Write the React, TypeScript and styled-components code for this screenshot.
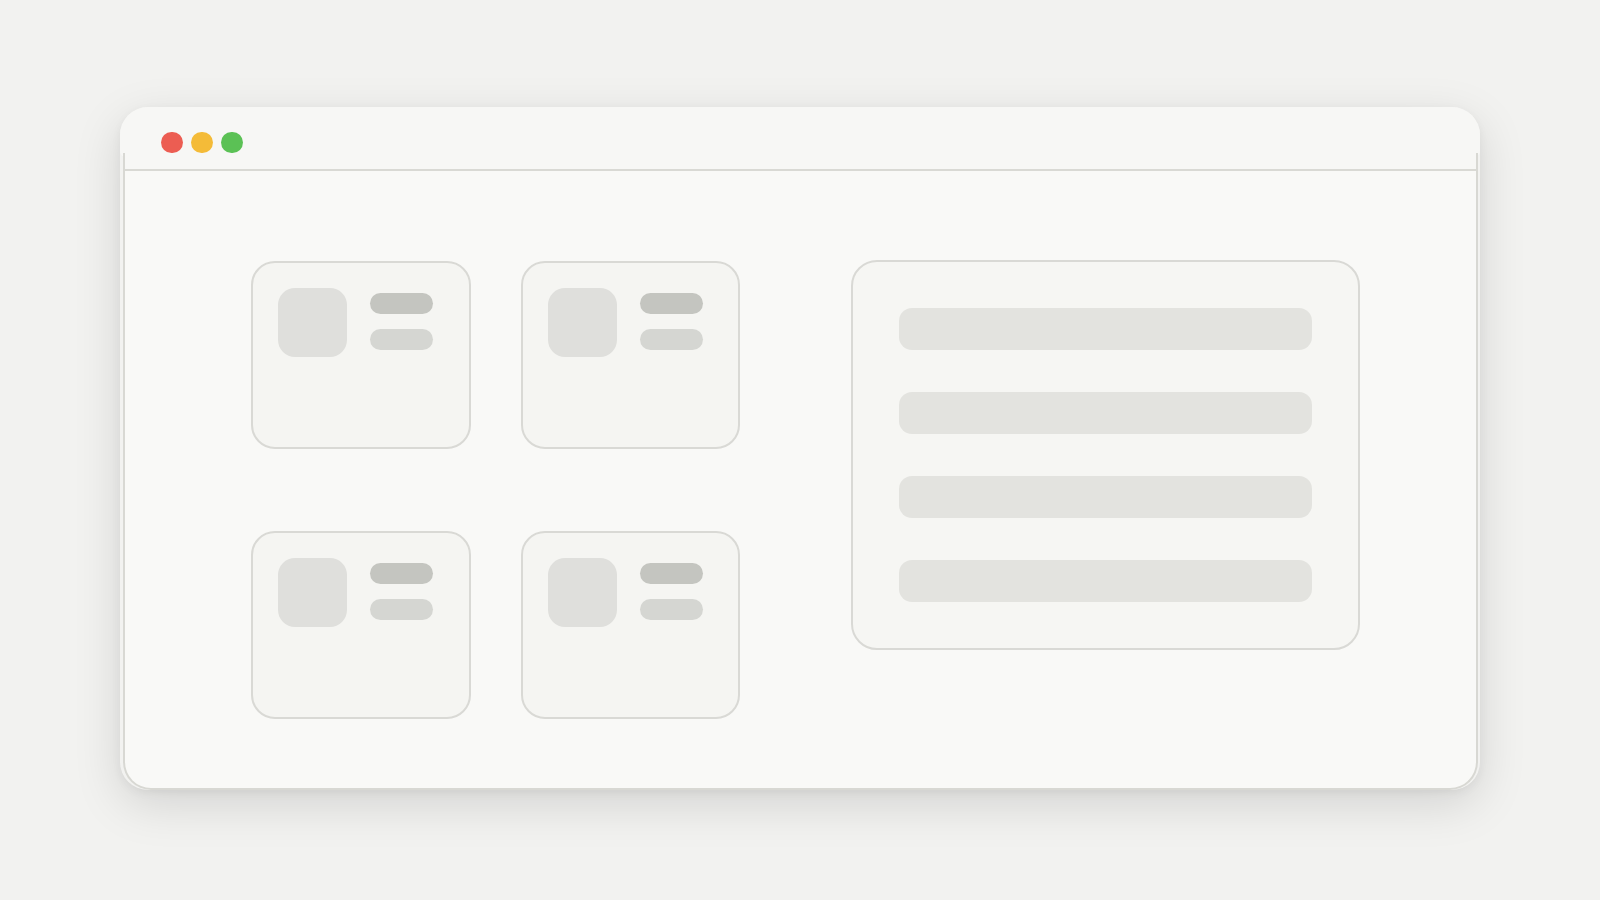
import React from "react";
import styled, { createGlobalStyle } from "styled-components";

const GlobalStyle = createGlobalStyle`
  html, body {
    margin: 0;
    padding: 0;
    background: #f2f2f0;
    font-family: "Liberation Sans", Arial, sans-serif;
  }
  #root {
    width: 1600px;
    height: 900px;
  }
`;

const Page = styled.div`
  width: 1600px;
  height: 900px;
  background: #f2f2f0;
  box-sizing: border-box;
  padding: 107px 0 0 120px;
`;

const Window = styled.div`
  width: 1360px;
  display: flex;
  flex-direction: column;
  align-items: center;
  border-radius: 28px;
  box-shadow: 0 14px 48px rgba(0, 0, 0, 0.13), 0 3px 10px rgba(0, 0, 0, 0.05);
`;

const TitleBar = styled.div`
  width: 1360px;
  height: 50px;
  box-sizing: border-box;
  background: #f7f7f5;
  border-radius: 28px 28px 6px 6px;
  display: flex;
  align-items: flex-end;
  gap: 8.5px;
  padding: 0 0 4px 41px;
`;

const Dot = styled.span<{ $color: string }>`
  width: 21.5px;
  height: 21.5px;
  border-radius: 50%;
  background: ${(p) => p.$color};
  flex: none;
`;

const Body = styled.div`
  width: 1355px;
  box-sizing: border-box;
  background: #f9f9f7;
  border: 2px solid #d8d8d3;
  border-top: none;
  border-radius: 0 0 28px 28px;
  display: flex;
  flex-direction: column;
  margin-top: -4px;
`;

const TitleStrip = styled.div`
  height: 16px;
  background: #f7f7f5;
  border-bottom: 2px solid #d9d9d4;
`;

const Content = styled.div`
  display: flex;
  align-items: flex-start;
  gap: 111px;
  padding: 90px 0 69px 126px;
`;

const CardGrid = styled.div`
  display: grid;
  grid-template-columns: 220px 219px;
  grid-auto-rows: 188px;
  column-gap: 50px;
  row-gap: 82px;
`;

const Card = styled.div`
  box-sizing: border-box;
  background: #f5f5f2;
  border: 2px solid #d9d9d5;
  border-radius: 24px;
  padding: 25px;
  display: flex;
  align-items: flex-start;
  gap: 23px;
`;

const Thumb = styled.div`
  width: 69px;
  height: 69px;
  border-radius: 17px;
  background: #dfdfdc;
  flex: none;
`;

const Lines = styled.div`
  display: flex;
  flex-direction: column;
  gap: 15px;
  padding-top: 5px;
`;

const Line = styled.div<{ $strong?: boolean }>`
  width: 63px;
  height: 21px;
  border-radius: 11px;
  background: ${(p) => (p.$strong ? "#c4c5c0" : "#d5d6d2")};
`;

const Panel = styled.div`
  width: 509px;
  box-sizing: border-box;
  background: #f6f6f3;
  border: 2px solid #d9d9d5;
  border-radius: 26px;
  padding: 46px;
  display: flex;
  flex-direction: column;
  gap: 42px;
  margin-top: -1px;
`;

const Bar = styled.div`
  height: 42px;
  border-radius: 13px;
  background: #e3e3df;
`;

const cards = [0, 1, 2, 3];
const bars = [0, 1, 2, 3];

export default function App() {
  return (
    <>
      <GlobalStyle />
      <Page>
        <Window>
          <TitleBar>
            <Dot $color="#ec5d52" />
            <Dot $color="#f4bb38" />
            <Dot $color="#5bc155" />
          </TitleBar>
          <Body>
            <TitleStrip />
            <Content>
              <CardGrid>
                {cards.map((c) => (
                  <Card key={c}>
                    <Thumb />
                    <Lines>
                      <Line $strong />
                      <Line />
                    </Lines>
                  </Card>
                ))}
              </CardGrid>
              <Panel>
                {bars.map((b) => (
                  <Bar key={b} />
                ))}
              </Panel>
            </Content>
          </Body>
        </Window>
      </Page>
    </>
  );
}
